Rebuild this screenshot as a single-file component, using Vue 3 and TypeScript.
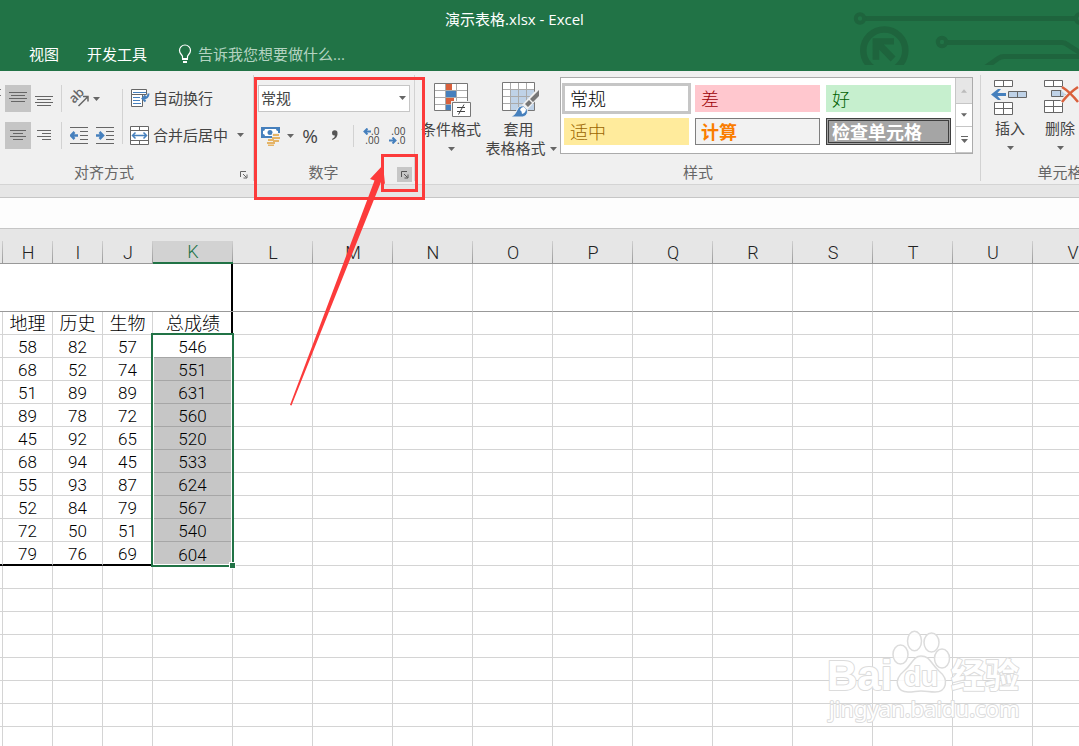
<script setup lang="ts">
interface Score {
  geography: number
  history: number
  biology: number
  total: number
}

const make = (geography: number, history: number, biology: number, total: number): Score => ({
  geography,
  history,
  biology,
  total,
})

const scores: Score[] = [
  make(58, 82, 57, 546),
  make(68, 52, 74, 551),
  make(51, 89, 89, 631),
  make(89, 78, 72, 560),
  make(45, 92, 65, 520),
  make(68, 94, 45, 533),
  make(55, 93, 87, 624),
  make(52, 84, 79, 567),
  make(72, 50, 51, 540),
  make(79, 76, 69, 604),
]

const narrowColumns: string[] = ['H', 'I', 'J']
const wideColumns: string[] = ['L', 'M', 'N', 'O', 'P', 'Q', 'R', 'S', 'T', 'U', 'V', 'W', 'X', 'Y', 'Z']
const emptyRows = 20

const cellStyles: { label: string; kind: string }[] = [
  { label: '常规', kind: 'normal' },
  { label: '差', kind: 'bad' },
  { label: '好', kind: 'good' },
  { label: '适中', kind: 'neutral' },
  { label: '计算', kind: 'calc' },
  { label: '检查单元格', kind: 'check' },
]
</script>

<template>
  <div class="window">
    <header class="top">
      <svg class="circuit" width="230" height="65" viewBox="849 0 230 65" fill="none" stroke="#1e643d" aria-hidden="true">
        <g stroke-width="5">
          <path d="M865 18.5H1075M946 42.5H1062Q1065 42.5 1068 45L1082 54M986 67L998 58.5Q1001 56.5 1004 56.5H1080" />
        </g>
        <g stroke-width="4">
          <circle cx="860" cy="18.5" r="4.2" />
          <circle cx="1080" cy="18.5" r="4.2" />
          <circle cx="942" cy="42" r="4.2" />
        </g>
        <circle cx="884.3" cy="50.5" r="21" stroke-width="6.5" />
        <path fill="#1e643d" stroke="none" d="M872.6 38.3H894V44.5H883.8L895.5 56.6L890.6 61.4L879.3 49.8V59.8H872.6Z" />
      </svg>
      <h1 class="title">演示表格.xlsx - Excel</h1>
      <nav class="tabs">
        <button type="button">视图</button>
        <button type="button">开发工具</button>
        <label class="tell">
          <svg width="14" height="20" viewBox="0 0 14 20" fill="none" stroke="#fff" stroke-width="1.2" aria-hidden="true">
            <path d="M4.5 14.5V12.5C4.2 10.6 1.5 9.8 1.5 6.5A5.5 5.5 0 0 1 12.5 6.5C12.5 9.8 9.8 10.6 9.5 12.5V14.5" />
            <path d="M4 15H10M5 18H9" stroke-width="2" />
          </svg>
          <input type="text" placeholder="告诉我您想要做什么..." aria-label="告诉我您想要做什么" />
        </label>
      </nav>
    </header>

    <section class="ribbon">
      <div class="group align">
        <div class="body">
          <svg class="cut" width="2" height="64" viewBox="0 0 2 64" stroke="#777" aria-hidden="true"><path d="M0 4.5H1M0 10.5H1" /></svg>
          <div class="pad">
            <button type="button" class="sq on" aria-label="垂直居中">
              <svg width="20" height="19" viewBox="0 0 20 19" stroke="#666"><path d="M1 3.5H19M3 6.5H17M1 9.5H19M3 12.5H17" /></svg>
            </button>
            <button type="button" class="sq" aria-label="底端对齐">
              <svg width="20" height="19" viewBox="0 0 20 19" stroke="#666"><path d="M1 7.5H19M3 10.5H17M1 13.5H19M3 16.5H17" /></svg>
            </button>
            <button type="button" class="sq on" aria-label="居中">
              <svg width="20" height="19" viewBox="0 0 20 19" stroke="#666"><path d="M2 4.5H18M5 7.5H15M2 10.5H18M5 13.5H15" /></svg>
            </button>
            <button type="button" class="sq" aria-label="右对齐">
              <svg width="20" height="19" viewBox="0 0 20 19" stroke="#666"><path d="M3 4.5H17M8 7.5H17M3 10.5H17M8 13.5H17" /></svg>
            </button>
          </div>
          <div class="indent">
            <div class="line">
              <button type="button" class="tool" aria-label="方向">
                <svg width="20" height="19" viewBox="0 0 20 19" fill="none" stroke="#666" stroke-width="1.5">
                  <text class="ab" x="0" y="0" transform="translate(4 15) rotate(-45)">ab</text>
                  <path d="M8.500 17L18 7.500M13 7.500H18V12.500" />
                </svg>
              </button>
              <svg class="caret" width="7" height="4" viewBox="0 0 7 4"><path d="M0 0H7L3.5 4Z" /></svg>
            </div>
            <div class="line">
              <button type="button" class="tool" aria-label="减少缩进量">
                <svg width="19" height="17" viewBox="0 0 19 17" stroke="#666">
                  <path d="M0 .5H18M10 4.500H18M10 8.500H18M10 12.500H18M0 16.500H18" />
                  <path d="M8 8.500H2M4.500 5L1 8.500L4.500 12" fill="none" stroke="#4680bd" stroke-width="2.500" />
                </svg>
              </button>
              <button type="button" class="tool" aria-label="增加缩进量">
                <svg width="19" height="17" viewBox="0 0 19 17" stroke="#666">
                  <path d="M0 .5H18M10 4.500H18M10 8.500H18M10 12.500H18M0 16.500H18" />
                  <path d="M0 8.500H6M3.500 5L7 8.500L3.500 12" fill="none" stroke="#4680bd" stroke-width="2.500" />
                </svg>
              </button>
            </div>
          </div>
          <div class="wraps">
            <button type="button" class="text-tool">
              <svg width="20" height="19" viewBox="0 0 20 19" fill="none" stroke="#666">
                <path fill="#fff" d="M1.500 .5H16.500V5.500H1.500ZM1.500 5.500H12.500V17.500H1.500Z" />
                <path stroke="#4680bd" d="M3 3.500H16M3 8.500H10M3 11.500H10M3 14.500H11" />
                <path d="M18.500 4.500C18.500 8 17 9.500 12.500 9.500M15.500 6.500L12.500 9.500L15.500 12.500" stroke="#4680bd" stroke-width="2" />
              </svg>
              <span>自动换行</span>
            </button>
            <button type="button" class="text-tool">
              <svg width="20" height="19" viewBox="0 0 20 19" fill="none" stroke="#666">
                <path fill="#fff" d="M.5 .5H18.500V18.500H.5Z" />
                <path d="M.5 4.500H18.500M.5 14.500H18.500M9.500 .5V4.500M9.500 14.500V18.500" />
                <path d="M3 9.500H16M5.500 6.500L2.500 9.500L5.500 12.500M13.500 6.500L16.500 9.500L13.500 12.500" stroke="#4680bd" stroke-width="1.500" />
              </svg>
              <span>合并后居中</span>
              <svg class="caret" width="7" height="4" viewBox="0 0 7 4"><path d="M0 0H7L3.5 4Z" /></svg>
            </button>
          </div>
        </div>
        <div class="caption">
          <span>对齐方式</span>
          <button type="button" class="launch" aria-label="对齐设置">
            <svg width="8" height="8" viewBox="0 0 8 8" stroke="#666" fill="none"><path d="M.5 6V.5H6M3 3L6.500 6.500M7 3.500V7H3.500" /></svg>
          </button>
        </div>
      </div>

      <div class="group number">
        <div class="body">
          <div class="format">
            <select aria-label="数字格式"><option>常规</option></select>
            <svg class="caret" width="7" height="4" viewBox="0 0 7 4"><path d="M0 0H7L3.5 4Z" /></svg>
          </div>
          <div class="number-tools">
            <button type="button" class="tool" aria-label="会计数字格式">
              <svg width="20" height="20" viewBox="0 0 20 20">
                <path d="M0 1H19V12H0Z" fill="#4680bd" />
                <path d="M2 5Q4 5 4 3H15Q15 5 17 5V8Q15 8 15 10H4Q4 8 2 8Z" fill="#fff" />
                <circle cx="9" cy="6.500" r="2.500" fill="#4680bd" />
                <path d="M11 7H19V17H14V20H6V12H11Z" fill="#f0f0f0" />
                <g stroke="#e5b467" stroke-width="2"><path d="M12 9H18M11 12H19M12 15H18M7 14H13M6 17H14M7 19.500H13" /></g>
              </svg>
            </button>
            <svg class="caret" width="7" height="4" viewBox="0 0 7 4"><path d="M0 0H7L3.5 4Z" /></svg>
            <button type="button" class="tool percent">%</button>
            <button type="button" class="tool" aria-label="千位分隔样式">
              <svg width="8" height="12" viewBox="0 0 8 12"><path fill="#555" d="M1 3A2.700 2.700 0 0 1 6.500 3Q7 8 1.500 10L1 9Q4 7.500 4 5.500Q1 6 1 3Z" /></svg>
            </button>
            <i class="bar"></i>
            <button type="button" class="decimal" aria-label="增加小数位数">
              <span><svg width="8" height="7" viewBox="0 0 8 7" fill="none" stroke="#4680bd" stroke-width="2"><path d="M8 3.500H2M4.500 .5L1.500 3.500L4.500 6.500" /></svg>.0</span>
              <span>.00</span>
            </button>
            <button type="button" class="decimal" aria-label="减少小数位数">
              <span>.00</span>
              <span><svg width="8" height="7" viewBox="0 0 8 7" fill="none" stroke="#4680bd" stroke-width="2"><path d="M0 3.500H6M3.500 .5L6.500 3.500L3.500 6.500" /></svg>.0</span>
            </button>
          </div>
        </div>
        <div class="caption">
          <span>数字</span>
          <button type="button" class="launch hot" aria-label="数字格式设置">
            <svg width="8" height="8" viewBox="0 0 8 8" stroke="#555" fill="none"><path d="M.5 6V.5H6M3 3L6.500 6.500M7 3.500V7H3.500" /></svg>
          </button>
        </div>
      </div>

      <div class="group styles">
        <div class="body">
          <button type="button" class="big cond">
            <svg width="38" height="36" viewBox="0 0 38 36" fill="none" stroke="#777">
              <path fill="#fff" d="M.5 .5H33.500V27.500H.5Z" />
              <path stroke="#aaa" d="M1 7.500H33M1 14.500H33M1 21.500H33M11.500 1V27M22.500 1V27" />
              <g stroke="none">
                <path fill="#d9603c" d="M12 1H18V7H12ZM12 15H20V21H12Z" />
                <path fill="#4680bd" d="M12 8H22V14H12ZM12 22H17V27H12Z" />
                <path fill="#f0f0f0" d="M17 18H38V36H17Z" />
              </g>
              <path fill="#fff" d="M18.500 19.500H36.500V33.500H18.500Z" />
              <path stroke="#444" d="M23 24.500H31M23 28.500H31M30 21.500L24.500 31.500" />
            </svg>
            <span>条件格式</span>
            <svg class="caret" width="7" height="4" viewBox="0 0 7 4"><path d="M0 0H7L3.5 4Z" /></svg>
          </button>
          <button type="button" class="big fmt">
            <svg width="38" height="36" viewBox="0 0 38 36" fill="none" stroke="#777">
              <path fill="#fff" d="M.5 .5H32.500V28.500H.5Z" />
              <path fill="#bfd2e7" stroke="none" d="M9 8H32V28H9Z" />
              <path stroke="#aaa" d="M1 7.500H32M1 14.500H32M1 21.500H32M8.500 1V28M16.500 1V28M24.500 1V28" />
              <path stroke="#f0f0f0" stroke-width="7" d="M39 8L22 26" />
              <path fill="#777" stroke="none" d="M37 8V14L31 20L28 17ZM27 18L30 21L26 25L23 22Z" />
              <path fill="#4680bd" stroke="#f0f0f0" d="M9 35Q14 32 15 28Q17 23 22 24L25 27Q27 33 21 35Z" />
              <path fill="#fff" stroke="none" d="M18 28Q19 25 22 25L24 27Q24 31 20 32Q20 29 18 28Z" />
            </svg>
            <span>套用</span>
            <span class="second">表格格式<svg class="caret" width="7" height="4" viewBox="0 0 7 4"><path d="M0 0H7L3.5 4Z" /></svg></span>
          </button>
          <div class="gallery">
            <div class="swatches">
              <button v-for="s in cellStyles" :key="s.kind" type="button" :class="['swatch', s.kind]">{{ s.label }}</button>
            </div>
            <div class="scroller">
              <button type="button" class="off" aria-label="上一行"><svg width="6" height="4" viewBox="0 0 7 4"><path d="M0 4H7L3.5 0Z" fill="#bbb" /></svg></button>
              <button type="button" aria-label="下一行"><svg width="6" height="4" viewBox="0 0 7 4"><path d="M0 0H7L3.5 4Z" fill="#666" /></svg></button>
              <button type="button" aria-label="其他"><svg width="7" height="7" viewBox="0 0 7 7"><path d="M0 0H7V1H0ZM0 3H7L3.500 7Z" fill="#666" /></svg></button>
            </div>
          </div>
        </div>
        <div class="caption"><span>样式</span></div>
      </div>

      <div class="group cells">
        <div class="body">
          <button type="button" class="big">
            <svg width="38" height="36" viewBox="0 0 38 36" fill="#fff" stroke="#666">
              <path d="M3.500 .5H21.500V6.500H3.500ZM12.500 .5V6.500M3.500 22.500H21.500V34.500H3.500ZM3.500 28.500H21.500M12.500 22.500V34.500" />
              <path fill="#bfd2e7" d="M17.500 11.500H35.500V17.500H17.500ZM26.500 11.500V17.500" />
              <path fill="#4680bd" stroke="none" d="M0 14.500L7 9H10L6.500 13H15V16H6.500L10 20H7Z" />
            </svg>
            <span>插入</span>
            <svg class="caret" width="7" height="4" viewBox="0 0 7 4"><path d="M0 0H7L3.5 4Z" /></svg>
          </button>
          <button type="button" class="big">
            <svg width="38" height="36" viewBox="0 0 38 36" fill="#fff" stroke="#666">
              <path d="M3.500 .5H21.500V6.500H3.500ZM12.500 .5V6.500M3.500 20.500H21.500V32.500H3.500ZM3.500 26.500H21.500M12.500 20.500V32.500" />
              <path fill="#bfd2e7" d="M10.500 10.500H24.500V16.500H10.500ZM19.500 10.500V16.500" />
              <path fill="none" stroke="#f0f0f0" stroke-width="6" d="M21 7L37 22M37 7L21 22" />
              <path fill="none" stroke="#d9603c" stroke-width="2.500" d="M21 7Q29 12 37 22M37 7Q28 13 21 22" />
            </svg>
            <span>删除</span>
            <svg class="caret" width="7" height="4" viewBox="0 0 7 4"><path d="M0 0H7L3.5 4Z" /></svg>
          </button>
        </div>
        <div class="caption"><span>单元格</span></div>
      </div>
    </section>

    <div class="formula"><input type="text" aria-label="编辑栏" /></div>

    <main class="sheet">
      <table>
        <colgroup>
          <col class="stub" />
          <col v-for="c in narrowColumns" :key="c" class="narrow" />
          <col class="wide" />
          <col v-for="c in wideColumns" :key="c" class="wide" />
        </colgroup>
        <thead>
          <tr>
            <th></th>
            <th v-for="c in narrowColumns" :key="c">{{ c }}</th>
            <th class="picked">K</th>
            <th v-for="c in wideColumns" :key="c">{{ c }}</th>
          </tr>
        </thead>
        <tbody>
          <tr class="banner">
            <td colspan="5" class="edge"></td>
            <td v-for="c in wideColumns" :key="c"></td>
          </tr>
          <tr>
            <td></td>
            <td class="cjk">地理</td>
            <td class="cjk">历史</td>
            <td class="cjk">生物</td>
            <td class="cjk edge">总成绩</td>
            <td v-for="c in wideColumns" :key="c"></td>
          </tr>
          <tr v-for="(s, i) in scores" :key="i" :class="{ last: i === scores.length - 1 }">
            <td class="data"></td>
            <td class="data">{{ s.geography }}</td>
            <td class="data">{{ s.history }}</td>
            <td class="data">{{ s.biology }}</td>
            <td :class="['total', { active: i === 0 }]">
              {{ s.total }}<span v-if="i === 0" class="selection"><i></i></span>
            </td>
            <td v-for="c in wideColumns" :key="c"></td>
          </tr>
          <tr v-for="r in emptyRows" :key="'e' + r">
            <td v-for="n in wideColumns.length + 5" :key="n"></td>
          </tr>
        </tbody>
      </table>
      <svg class="watermark" width="200" height="100" viewBox="824 626 200 100" aria-hidden="true">
        <g fill="#fff" fill-opacity=".85" stroke="#dcdcdc" stroke-width="1.500">
          <ellipse cx="900.500" cy="654.500" rx="7.500" ry="9.500" />
          <ellipse cx="914.500" cy="641" rx="7" ry="9.800" />
          <ellipse cx="931.500" cy="642.500" rx="7.500" ry="9.500" />
          <ellipse cx="942" cy="658.500" rx="7.500" ry="9.500" />
          <path d="M921 656C913 656 912 665 904 671C892 681 898 692 908 692C914 692 916 691 921 691C927 691 929 692 935 692C946 692 950 680 939 671C931 664 930 656 921 656Z" />
          <g fill-opacity="1" paint-order="stroke" stroke-width="2" stroke-linejoin="round">
            <text x="827" y="690" class="brand">Bai</text>
            <text x="904" y="686" class="du">du</text>
            <text x="951" y="688" class="exp">经验</text>
            <text x="829" y="717" class="url">jingyan.baidu.com</text>
          </g>
        </g>
      </svg>
    </main>

    <svg class="marks" width="180" height="340" viewBox="250 70 180 340" aria-hidden="true">
      <g fill="none" stroke="#fc3b3b" stroke-width="3">
        <path d="M255.500 78.500H423.500V198.500H255.500Z" />
        <path d="M382.500 155.500H416.500V190.500H382.500Z" />
      </g>
      <path fill="#fc3b3b" d="M383 165L370 179L374.500 180.500L290 405L291.500 405.500L381 182L385 184Z" />
    </svg>
  </div>
</template>

<style>
body {
  margin: 0;
}
</style>

<style scoped>
.window {
  position: relative;
  display: flex;
  flex-direction: column;
  height: 100vh;
  overflow: hidden;
  background: #fff;
  color: #444;
  font: 15px/20px "Open Sans", "Noto Sans CJK SC", sans-serif;
}
button,
input,
select {
  margin: 0;
  padding: 0;
  border: 0;
  border-radius: 0;
  background: none;
  color: inherit;
  font: inherit;
}
svg {
  display: block;
  flex: none;
}
.caret {
  fill: #666;
}
.ab {
  fill: #666;
  stroke: none;
  font: 600 13px "Open Sans", sans-serif;
}
.top {
  position: relative;
  flex: none;
  height: 71px;
  overflow: hidden;
  background: #217346;
  color: #fff;
}
.circuit {
  position: absolute;
  top: 0;
  right: 0;
}
.title {
  margin: 0;
  padding: 9px 50px 0 0;
  font-size: 15px;
  font-weight: 400;
  line-height: 20px;
  text-align: center;
}
.tabs {
  display: flex;
  gap: 28px;
  align-items: center;
  padding: 14px 0 0 29px;
}
.tell {
  display: flex;
  gap: 6px;
  align-items: center;
  padding-left: 3px;
}
.tell input {
  width: 180px;
  height: 22px;
}
.tell input::placeholder {
  color: #b4d3c1;
  opacity: 1;
}
.ribbon {
  display: flex;
  flex: none;
  height: 113px;
  overflow: hidden;
  border-bottom: 1px solid #d4d4d4;
  background: #f0f0f0;
}
.group {
  position: relative;
  display: flex;
  flex: none;
  flex-direction: column;
  box-sizing: border-box;
  height: 113px;
}
.group::after {
  content: "";
  position: absolute;
  top: 4px;
  right: 0;
  bottom: 3px;
  width: 1px;
  background: #d2d2d2;
}
.body {
  display: flex;
  height: 91px;
}
.caption {
  position: relative;
  color: #666;
  line-height: 20px;
  text-align: center;
}
.launch {
  position: absolute;
  top: 5px;
  right: 3px;
  display: grid;
  place-items: center;
  width: 15px;
  height: 15px;
}
.launch.hot {
  background: #c6c6c6;
}
.align {
  width: 254px;
}
.align .caption {
  padding-right: 46px;
}
.cut {
  margin-top: 14px;
}
.pad {
  display: grid;
  grid-template-columns: 26px 26px;
  grid-template-rows: 27px 27px;
  row-gap: 10px;
  padding: 14px 4px 0 3px;
}
.sq {
  display: grid;
  place-items: center;
}
.sq.on {
  background: #c5c5c5;
}
.indent {
  display: grid;
  grid-template-rows: 27px 27px;
  row-gap: 10px;
  padding-top: 14px;
}
.line {
  display: flex;
  gap: 7px;
  align-items: center;
  box-sizing: border-box;
  width: 61px;
  padding-left: 8px;
  border-left: 1px solid #d2d2d2;
}
.line .caret {
  margin-left: -4px;
}
.wraps {
  display: grid;
  grid-template-rows: 27px 27px;
  row-gap: 10px;
  align-content: center;
  height: 55px;
  margin-top: 18px;
  padding-left: 7px;
  border-left: 1px solid #d2d2d2;
}
.text-tool {
  display: flex;
  gap: 3px;
  align-items: center;
}
.text-tool .caret {
  margin-left: 6px;
}
.number {
  width: 161px;
}
.number .body {
  flex-direction: column;
}
.number .caption {
  padding-right: 22px;
}
.format {
  position: relative;
  margin: 14px 5px 0 4px;
}
.format select {
  display: block;
  box-sizing: border-box;
  width: 100%;
  height: 27px;
  padding: 0 0 2px 2px;
  border: 1px solid #c6c6c6;
  background: #fff;
  appearance: none;
}
.format .caret {
  position: absolute;
  top: 11px;
  right: 4px;
}
.number-tools {
  display: flex;
  align-items: center;
  height: 27px;
  margin-top: 10px;
  padding-left: 7px;
}
.number-tools > .caret {
  margin: 0 7px 0 6px;
}
.percent {
  width: 18px;
  margin-right: 12px;
  font-size: 19px;
}
.bar {
  width: 1px;
  height: 22px;
  margin: 0 9px 0 14px;
  background: #d2d2d2;
}
.decimal {
  display: grid;
  justify-items: end;
  width: 16px;
  margin-right: 10px;
  font-size: 10px;
  line-height: 9px;
}
.decimal span {
  display: flex;
  align-items: center;
}
.styles {
  width: 566px;
}
.big {
  display: flex;
  flex-direction: column;
  align-items: center;
  line-height: 19px;
  white-space: nowrap;
}
.big > svg:first-child {
  margin-bottom: 3px;
}
.big > .caret {
  margin-top: 8px;
}
.cond {
  width: 60px;
  padding-top: 12px;
  margin-left: 6px;
}
.cond > svg:first-child {
  margin: 0 -4px 1px 0;
}
.fmt > svg:first-child {
  margin: 0 -4px 2px 0;
}
.fmt {
  width: 75px;
  padding-top: 11px;
  margin-right: 4px;
}
.cond,
.fmt {
  justify-content: flex-start;
}
.second {
  display: flex;
  gap: 4px;
  align-items: center;
  padding-left: 5px;
}
.gallery {
  display: flex;
  box-sizing: border-box;
  width: 413px;
  height: 77px;
  margin-top: 6px;
  border: 1px solid #ababab;
  background: #fff;
}
.swatches {
  display: grid;
  flex: 1;
  grid-template-columns: repeat(3, 125px);
  grid-template-rows: 27px 27px;
  gap: 6px;
  padding: 7px 0 0 3px;
}
.swatch {
  box-sizing: border-box;
  padding-left: 6px;
  font-size: 18px;
  font-weight: 300;
  line-height: 24px;
  text-align: left;
}
.normal {
  outline: 3px solid #c6c6c6;
  outline-offset: -1px;
  color: #000;
}
.bad {
  background: #ffc7ce;
  color: #9c0006;
}
.good {
  background: #c6efce;
  color: #006100;
}
.neutral {
  background: #ffeb9c;
  color: #9c6500;
}
.calc {
  padding-left: 5px;
  border: 1px solid #7f7f7f;
  background: #f2f2f2;
  color: #fa7d00;
  font-weight: 700;
}
.check {
  padding-left: 3px;
  border: 3px double #3f3f3f;
  background: #a5a5a5;
  color: #fff;
  font-weight: 700;
  line-height: 20px;
}
.scroller {
  display: grid;
  grid-template-rows: 26px 23px 26px;
  width: 17px;
}
.scroller button {
  display: grid;
  place-items: center;
  border-bottom: 1px solid #c6c6c6;
  border-left: 1px solid #c6c6c6;
}
.scroller .off {
  background: #e6e6e6;
}
.cells {
  width: 158px;
}
.cells .body {
  gap: 12px;
  padding-left: 10px;
}
.cells .big {
  justify-content: flex-start;
  padding-top: 9px;
}
.formula {
  flex: none;
  padding-top: 12px;
  border-bottom: 1px solid #c6c6c6;
  background: #e6e6e6;
}
.formula input {
  display: block;
  box-sizing: border-box;
  width: 100%;
  height: 31px;
  border-top: 1px solid #c6c6c6;
  background: #fdfdfd;
}
.sheet {
  position: relative;
  flex: 1;
  min-height: 0;
  overflow: hidden;
  padding-top: 12px;
  background: linear-gradient(#e6e6e6 34px, #fff 34px);
}
table {
  width: 1433px;
  border-spacing: 0;
  table-layout: fixed;
  color: #000;
  font-family: Roboto, "Noto Sans CJK SC", sans-serif;
  font-size: 17px;
  font-weight: 300;
  line-height: 20px;
  text-align: center;
}
.stub {
  width: 3px;
}
.narrow {
  width: 50px;
}
.wide {
  width: 80px;
}
th,
td {
  box-sizing: border-box;
  height: 23px;
  padding: 2px 0 0;
  overflow: hidden;
  border: solid #d4d4d4;
  border-width: 0 1px 1px 0;
  white-space: nowrap;
}
th {
  border-right: 0;
  border-bottom-color: #999;
  background: linear-gradient(#cfcfcf, #999) right / 1px 100% no-repeat #e6e6e6;
  color: #222;
  font-size: 18px;
  font-weight: 300;
}
.picked {
  padding-top: 1px;
  border-bottom: 2px solid #217346;
  background-color: #d2d2d2;
  color: #217346;
}
.banner td {
  height: 48px;
  border-bottom-color: #999;
}
.edge {
  border-right: 0;
  background: linear-gradient(#000, #000) right / 2px 100% no-repeat;
  background-clip: padding-box;
}
.cjk {
  font-size: 18px;
}
.total {
  position: relative;
  overflow: visible;
  border-bottom-color: #a6a6a6;
  background: #c6c6c6;
}
.total.active {
  background: #fff;
}
.last td {
  height: 24px;
}
.last .data {
  border-bottom: 2px solid #000;
}
.selection {
  position: absolute;
  top: -2px;
  right: -2px;
  left: -2px;
  z-index: 1;
  box-sizing: border-box;
  height: 234px;
  border: 2px solid #217346;
  box-shadow: inset 0 0 0 1px #fff;
}
.selection i {
  position: absolute;
  right: -4px;
  bottom: -4px;
  width: 5px;
  height: 5px;
  border: 1px solid #fff;
  background: #217346;
}
.watermark {
  position: absolute;
  right: 55px;
  bottom: 20px;
}
.brand {
  font: 700 42px "Liberation Sans", sans-serif;
}
.du {
  font: 700 28px "Liberation Sans", sans-serif;
}
.exp {
  font: 700 34px "Noto Sans CJK SC", sans-serif;
}
.url {
  font: 22px "Noto Sans", sans-serif;
}
.marks {
  position: absolute;
  top: 70px;
  left: 250px;
  z-index: 2;
  pointer-events: none;
}
</style>
